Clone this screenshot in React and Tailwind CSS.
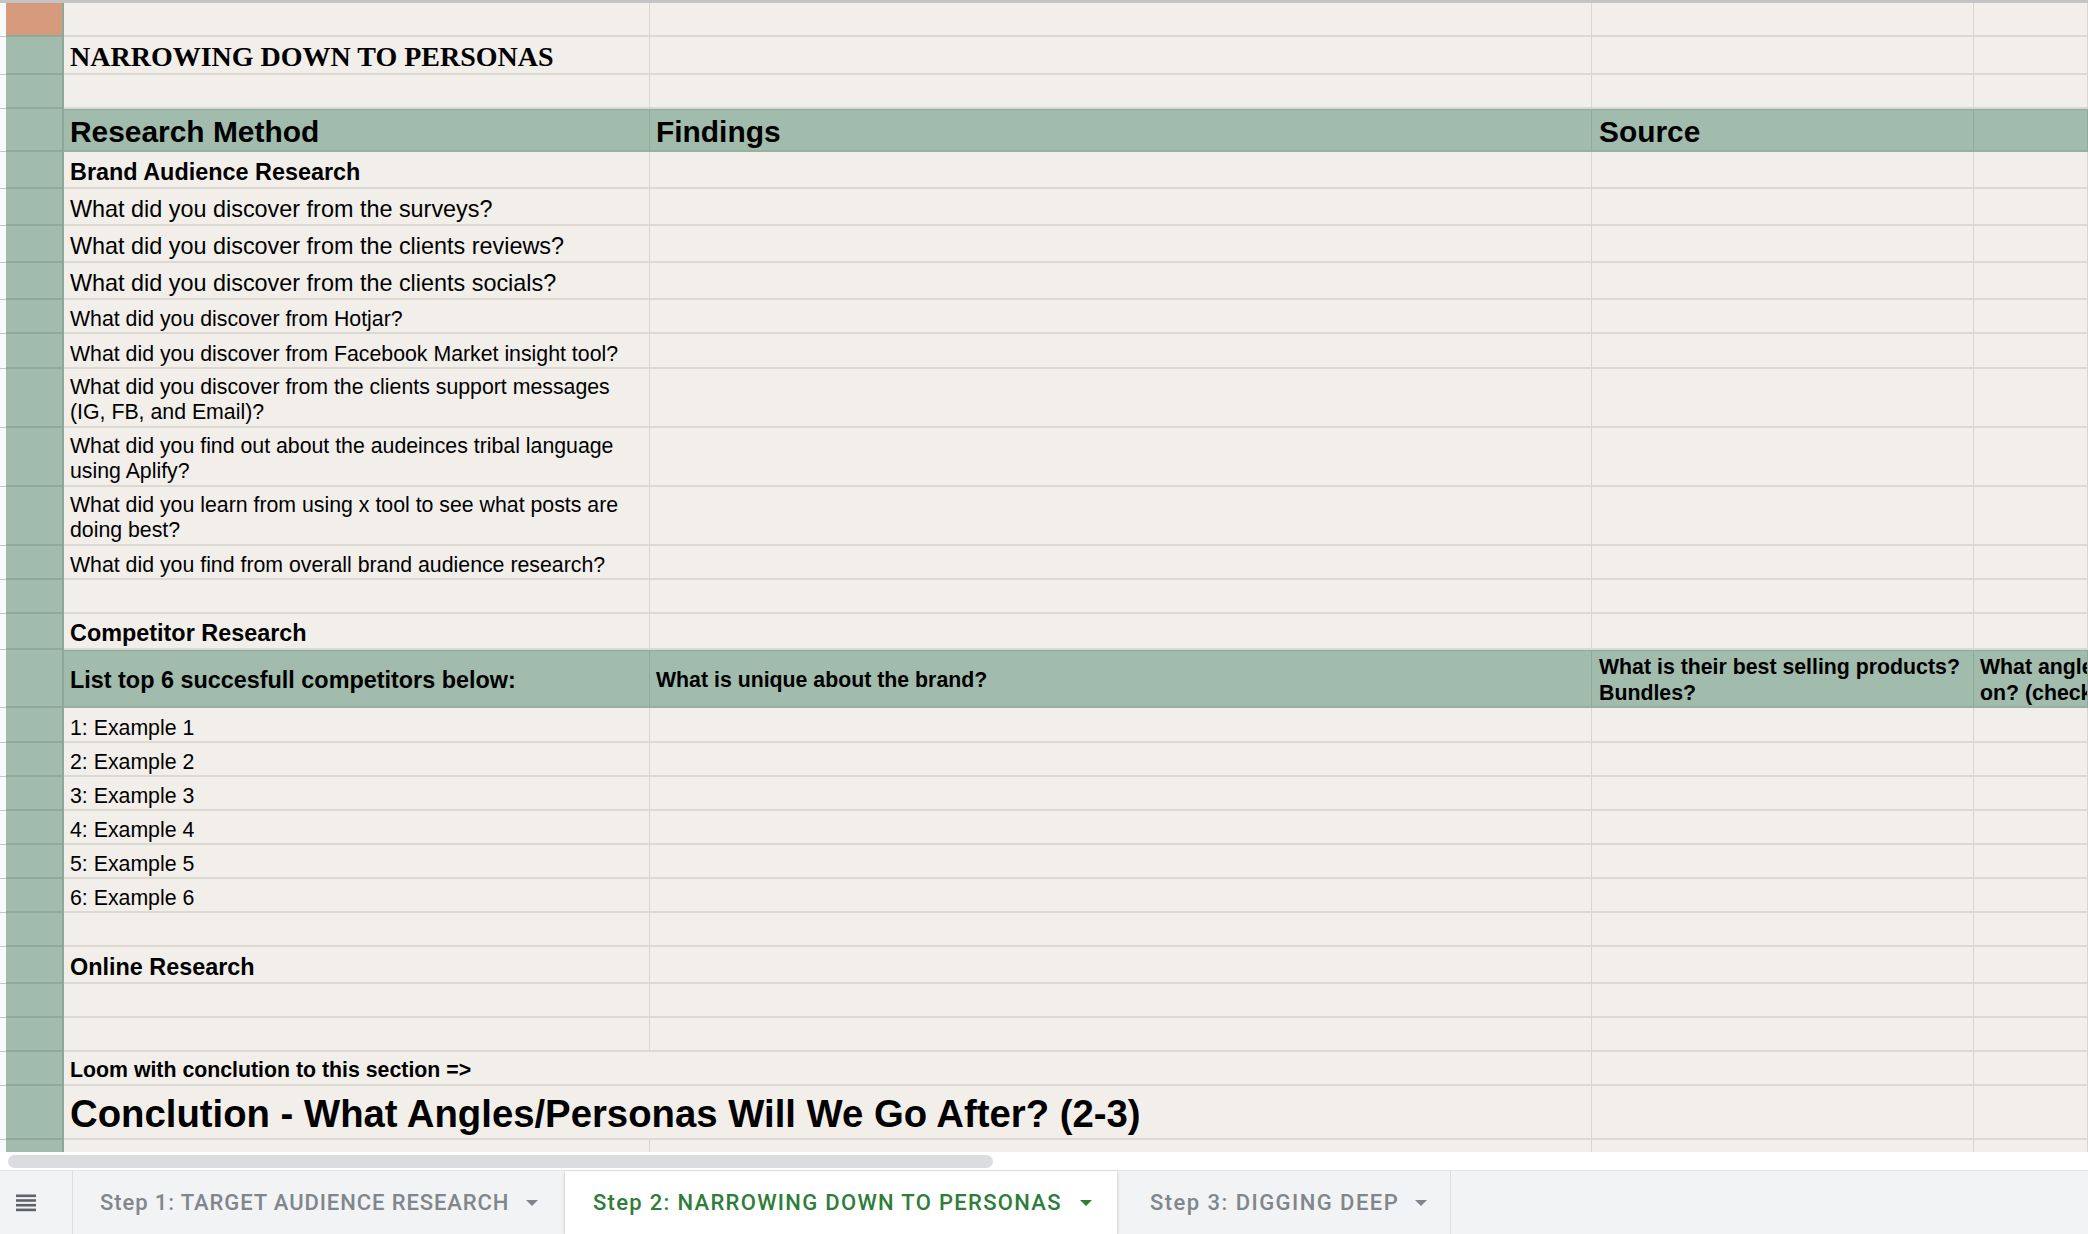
import React from "react";

function Row({ h, side = "g", band = false, align = "end", a, b, c, d, merge = false }) {
  const cell = band
    ? "bg-[#a1bbac] border-b-2 border-b-[#97b0a2] border-r border-r-[#8fa99b] shadow-[inset_0_1px_0_#8fa99b]"
    : "bg-[#f2efea] border-b-2 border-b-[#dcd9d3] border-r border-r-[#d9d6d0]";
  const al = align === "center" ? "items-center pt-[4px]" : "items-end pb-[1px]";
  return (
    <div className={`flex shrink-0 ${h}`}>
      <div className="w-[6px] shrink-0 bg-[#f8f9fa] border-b border-b-[#c4c7c5]" />
      <div
        className={`w-[58px] shrink-0 border-r-2 border-r-[#8ea898] border-b-2 border-b-[#8fa99b] ${
          side === "o" ? "bg-[#d69a7c]" : "bg-[#a1bbac]"
        }`}
      />
      {merge ? (
        <div className={`w-[1528px] shrink-0 flex ${al} pl-[6px] ${cell}`}>{a}</div>
      ) : (
        <>
          <div className={`w-[586px] shrink-0 flex ${al} pl-[6px] overflow-hidden ${cell}`}>{a}</div>
          <div className={`w-[942px] shrink-0 flex ${al} pl-[6px] overflow-hidden ${cell}`}>{b}</div>
        </>
      )}
      <div className={`w-[382px] shrink-0 flex ${al} pl-[7px] overflow-hidden ${cell}`}>{c}</div>
      <div className={`flex-1 flex ${al} pl-[6px] overflow-hidden ${cell}`}>{d}</div>
    </div>
  );
}

const T10 = ({ children }) => (
  <div className="text-[21.3px] leading-[1.15] whitespace-nowrap">{children}</div>
);
const T10w = ({ children }) => (
  <div className="text-[21.3px] leading-[25px] whitespace-nowrap">{children}</div>
);
const T11 = ({ children }) => (
  <div className="text-[23.4px] leading-[1.15] whitespace-nowrap">{children}</div>
);
const B10 = ({ children }) => (
  <div className="text-[21.3px] font-bold leading-[1.15] whitespace-nowrap">{children}</div>
);
const B10w = ({ children }) => (
  <div className="text-[21.3px] font-bold leading-[26px] whitespace-nowrap">{children}</div>
);
const B11 = ({ children }) => (
  <div className="text-[23.4px] font-bold leading-[1.15] whitespace-nowrap">{children}</div>
);
const B14 = ({ children }) => (
  <div className="text-[29.9px] font-bold leading-[1.15] whitespace-nowrap">{children}</div>
);

function Arrow({ color }) {
  return (
    <svg width="12" height="6" viewBox="0 0 12 6" className="shrink-0">
      <path d="M0 0 L12 0 L6 6 Z" fill={color} />
    </svg>
  );
}

function TabBar() {
  return (
    <div className="h-[64px] shrink-0 bg-[#f1f3f4] flex items-stretch border-t border-t-[#e3e5e8] font-['Roboto',sans-serif] font-medium text-[22px]">
      <div className="w-[73px] shrink-0 flex items-center pl-[16px] border-r border-r-[#dadce0]">
        <svg width="20" height="18" viewBox="0 0 20 18">
          <rect x="0" y="0.5" width="20" height="2.6" fill="#5f6368" />
          <rect x="0" y="5.2" width="20" height="2.6" fill="#5f6368" />
          <rect x="0" y="9.9" width="20" height="2.6" fill="#5f6368" />
          <rect x="0" y="14.6" width="20" height="2.6" fill="#5f6368" />
        </svg>
      </div>
      <div className="w-[490px] shrink-0 flex items-center pl-[27px] gap-[17px] text-[#80868b] tracking-[0.9px]">
        <span className="whitespace-nowrap">Step 1: TARGET AUDIENCE RESEARCH</span>
        <Arrow color="#80868b" />
      </div>
      <div className="w-[552px] shrink-0 ml-[2px] flex items-center pl-[28px] gap-[18px] bg-white text-[#2f7d3a] tracking-[1.3px] shadow-[0_1px_3px_rgba(60,64,67,0.3)]">
        <span className="whitespace-nowrap">Step 2: NARROWING DOWN TO PERSONAS</span>
        <Arrow color="#2f7d3a" />
      </div>
      <div className="w-[334px] shrink-0 flex items-center pl-[33px] gap-[16px] text-[#80868b] tracking-[1.45px] border-r border-r-[#dadce0]">
        <span className="whitespace-nowrap">Step 3: DIGGING DEEP</span>
        <Arrow color="#80868b" />
      </div>
      <div className="flex-1" />
    </div>
  );
}

export default function App() {
  return (
    <div className="w-[2088px] h-[1234px] overflow-hidden bg-white flex flex-col font-['Liberation_Sans',Arial,sans-serif] text-black">
      <div className="h-[3px] shrink-0 bg-[#c4c4c4]" />
      <div className="flex flex-col h-[1149px] shrink-0 overflow-hidden">
        <Row h="h-[34px]" side="o" />
        <Row
          h="h-[38px]"
          align="center"
          a={
            <div className="font-['Liberation_Serif','Times_New_Roman',serif] font-bold text-[28px] leading-[1.15] whitespace-nowrap">
              NARROWING DOWN TO PERSONAS
            </div>
          }
        />
        <Row h="h-[34px]" />
        <Row h="h-[43px]" band a={<B14>Research Method</B14>} b={<B14>Findings</B14>} c={<B14>Source</B14>} />
        <Row h="h-[37px]" a={<B11>Brand Audience Research</B11>} />
        <Row h="h-[37px]" a={<T11>What did you discover from the surveys?</T11>} />
        <Row h="h-[37px]" a={<T11>What did you discover from the clients reviews?</T11>} />
        <Row h="h-[37px]" a={<T11>What did you discover from the clients socials?</T11>} />
        <Row h="h-[34px]" a={<T10>What did you discover from Hotjar?</T10>} />
        <Row h="h-[35px]" a={<T10>What did you discover from Facebook Market insight tool?</T10>} />
        <Row
          h="h-[59px]"
          a={
            <T10w>
              What did you discover from the clients support messages
              <br />
              (IG, FB, and Email)?
            </T10w>
          }
        />
        <Row
          h="h-[59px]"
          a={
            <T10w>
              What did you find out about the audeinces tribal language
              <br />
              using Aplify?
            </T10w>
          }
        />
        <Row
          h="h-[59px]"
          a={
            <T10w>
              What did you learn from using x tool to see what posts are
              <br />
              doing best?
            </T10w>
          }
        />
        <Row h="h-[34px]" a={<T10>What did you find from overall brand audience research?</T10>} />
        <Row h="h-[34px]" />
        <Row h="h-[36px]" a={<B11>Competitor Research</B11>} />
        <Row
          h="h-[58px]"
          band
          align="center"
          a={<B11>List top 6 succesfull competitors below:</B11>}
          b={<B10>What is unique about the brand?</B10>}
          c={
            <B10w>
              What is their best selling products?
              <br />
              Bundles?
            </B10w>
          }
          d={
            <B10w>
              What angles are they focusing
              <br />
              on? (check their ads)
            </B10w>
          }
        />
        <Row h="h-[35px]" a={<T10>1: Example 1</T10>} />
        <Row h="h-[34px]" a={<T10>2: Example 2</T10>} />
        <Row h="h-[34px]" a={<T10>3: Example 3</T10>} />
        <Row h="h-[34px]" a={<T10>4: Example 4</T10>} />
        <Row h="h-[34px]" a={<T10>5: Example 5</T10>} />
        <Row h="h-[34px]" a={<T10>6: Example 6</T10>} />
        <Row h="h-[34px]" />
        <Row h="h-[37px]" a={<B11>Online Research</B11>} />
        <Row h="h-[34px]" />
        <Row h="h-[34px]" />
        <Row h="h-[34px]" merge align="center" a={<B10>Loom with conclution to this section =&gt;</B10>} />
        <Row
          h="h-[54px]"
          merge
          align="center"
          a={
            <div className="text-[38.3px] font-bold leading-[1.15] whitespace-nowrap">
              Conclution - What Angles/Personas Will We Go After? (2-3)
            </div>
          }
        />
        <Row h="h-[34px]" />
      </div>
      <div className="h-[18px] shrink-0 bg-white flex items-center pl-[8px]">
        <div className="w-[985px] h-[13px] rounded-full bg-[#dadce0]" />
      </div>
      <TabBar />
    </div>
  );
}
